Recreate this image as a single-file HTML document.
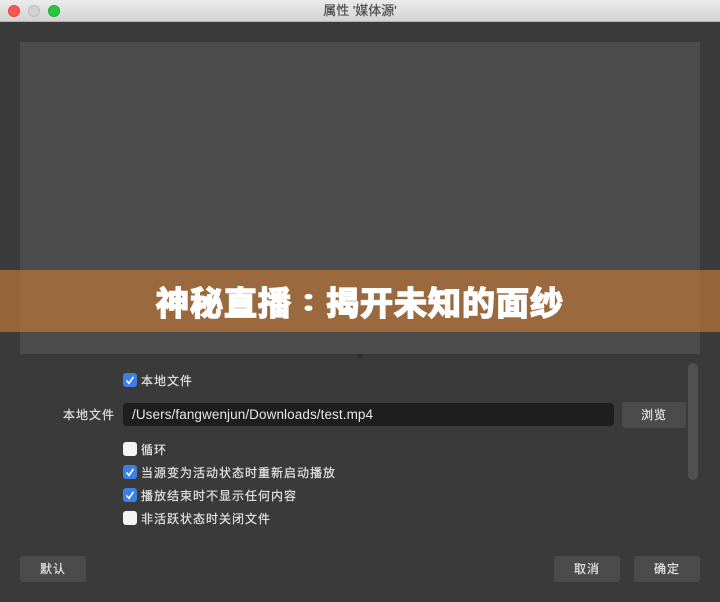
<!DOCTYPE html>
<html lang="zh">
<head>
<meta charset="utf-8">
<style>
html,body{margin:0;padding:0;width:720px;height:602px;overflow:hidden;background:#3a3a3a}
body{position:relative;font-family:"Liberation Sans","Noto Sans CJK SC",sans-serif;color:#e2e2e2;font-size:12px}
.a{position:absolute}
.bar{left:0;top:0;width:720px;height:21px;background:linear-gradient(#ebebeb,#d3d3d3);border-bottom:1px solid #b4b4b4}
.l{top:5px;width:12px;height:12px;border-radius:50%;box-sizing:border-box}
.title{left:0;width:720px;top:3px;text-align:center;font-size:13px;line-height:16px;color:#4a4a4a;-webkit-text-stroke:.2px #4a4a4a}
.preview{left:20px;top:42px;width:680px;height:312px;background:#4c4c4c}
.banner{left:0;top:270px;width:720px;height:62px;background:rgba(181,115,57,.75);display:flex;align-items:center;justify-content:center;color:#fff;font-size:33px;font-weight:700;letter-spacing:1px;-webkit-text-stroke:1.6px #fff;white-space:nowrap}
.banner span{display:inline-block;font-family:"Liberation Sans","Noto Sans CJK TC",sans-serif;transform:scaleY(.7)}
.cb{left:123px;width:14px;height:14px;border-radius:3px;background:#f4f4f4}
.cb.on{background:#3d7fe6}
.cb svg{position:absolute;left:0;top:0}
.t{left:141px;line-height:16px;letter-spacing:1px;white-space:nowrap;-webkit-text-stroke:.2px #e2e2e2}
.btn{background:#4b4b4b;border-radius:3px;text-align:center;line-height:26px;height:26px;letter-spacing:1px;color:#e4e4e4;-webkit-text-stroke:.2px #e4e4e4}
</style>
</head>
<body>
<div class="a bar"></div>
<div class="a l" style="left:8px;background:#fc5753;border:1px solid #df4744"></div>
<div class="a l" style="left:28px;background:#d2d2d2;border:1px solid #bcbcbc"></div>
<div class="a l" style="left:48px;background:#28c73f;border:1px solid #1dad2b"></div>
<div class="a title">属性 '媒体源'</div>

<div class="a preview"></div>
<div class="a" style="left:357px;top:354px;width:6px;height:3px;border-radius:0 0 3px 3px;background:#2c2c2c"></div>
<div class="a banner">神秘直播<span>：</span>揭开未知的面纱</div>

<div class="a cb on" style="top:373px"><svg width="14" height="14"><path d="M3.5 7.5 6 10.3 10.5 3.8" fill="none" stroke="#fff" stroke-width="1.6"/></svg></div>
<div class="a t" style="top:373px">本地文件</div>

<div class="a t" style="left:63px;top:407px">本地文件</div>
<div class="a" style="left:123px;top:403px;width:491px;height:23px;background:#1e1e1e;border-radius:4px"></div>
<div class="a" style="left:132px;top:407px;font-size:13.5px;letter-spacing:.09px;line-height:16px;color:#e6e6e6;white-space:nowrap">/Users/fangwenjun/Downloads/test.mp4</div>
<div class="a btn" style="left:622px;top:402px;width:64px">浏览</div>
<div class="a" style="left:688px;top:363px;width:10px;height:117px;border-radius:5px;background:#505050"></div>

<div class="a cb" style="top:442px"></div>
<div class="a t" style="top:442px">循环</div>
<div class="a cb on" style="top:465px"><svg width="14" height="14"><path d="M3.5 7.5 6 10.3 10.5 3.8" fill="none" stroke="#fff" stroke-width="1.6"/></svg></div>
<div class="a t" style="top:465px">当源变为活动状态时重新启动播放</div>
<div class="a cb on" style="top:488px"><svg width="14" height="14"><path d="M3.5 7.5 6 10.3 10.5 3.8" fill="none" stroke="#fff" stroke-width="1.6"/></svg></div>
<div class="a t" style="top:488px">播放结束时不显示任何内容</div>
<div class="a cb" style="top:511px"></div>
<div class="a t" style="top:511px">非活跃状态时关闭文件</div>

<div class="a btn" style="left:20px;top:556px;width:66px">默认</div>
<div class="a btn" style="left:554px;top:556px;width:66px">取消</div>
<div class="a btn" style="left:634px;top:556px;width:66px">确定</div>
</body>
</html>
